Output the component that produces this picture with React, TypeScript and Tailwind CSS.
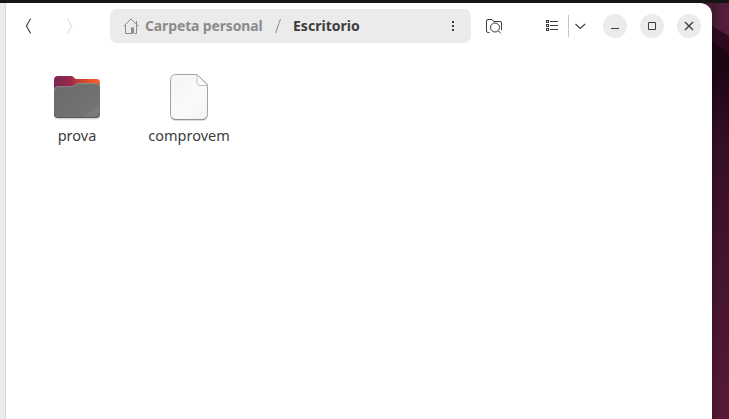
import React from "react";

function Wallpaper() {
  return (
    <svg className="absolute right-0 top-[3px] h-[416px] w-[31px]" viewBox="698 3 31 416" preserveAspectRatio="none" aria-hidden="true">
      <defs>
        <linearGradient id="base" x1="0" y1="0" x2="0" y2="1">
          <stop offset="0" stopColor="#1c0512" />
          <stop offset="0.16" stopColor="#1e0613" />
          <stop offset="0.33" stopColor="#350f24" />
          <stop offset="0.6" stopColor="#43142e" />
          <stop offset="1" stopColor="#561938" />
        </linearGradient>
        <linearGradient id="upper" x1="0" y1="0" x2="1" y2="0">
          <stop offset="0" stopColor="#421630" />
          <stop offset="1" stopColor="#56203f" />
        </linearGradient>
        <linearGradient id="edge" x1="0" y1="0" x2="1" y2="0">
          <stop offset="0" stopColor="#000" stopOpacity="0.15" />
          <stop offset="1" stopColor="#000" stopOpacity="0" />
        </linearGradient>
      </defs>
      <rect x="698" y="3" width="31" height="416" fill="url(#base)" />
      <path d="M698 3H729V54L712 41L698 32Z" fill="#2d0a1d" />
      <path d="M698 3H729V36L712 26L698 18Z" fill="url(#upper)" />
      <rect x="712" y="3" width="8" height="416" fill="url(#edge)" />
    </svg>
  );
}

function HomeIcon() {
  return (
    <svg className="h-4 w-4 shrink-0" viewBox="0 0 16 16" fill="none" stroke="#8b8b8b">
      <path d="M.6 8.3L8 .9l7.4 7.4M2.5 6.8v8.7h6V10M13.500 3v12.500h-2" />
      <path d="M8 9.500h3v6H8z" fill="#8b8b8b" stroke="none" />
    </svg>
  );
}

function SearchFolderIcon() {
  return (
    <svg className="h-4 w-[17px]" viewBox="0 0 17 16" fill="none" stroke="#3d3d3d">
      <path d="M3.500 14.500H2A1.500 1.500 0 0 1 .500 13V3A1.500 1.500 0 0 1 2 1.500h4l1.500 2H14A1.500 1.500 0 0 1 15.500 5V12" />
      <circle cx="9" cy="9.500" r="4.500" />
      <path d="M12.300 12.800L14.700 15.300" />
    </svg>
  );
}

function ListIcon() {
  return (
    <svg className="h-3 w-3" viewBox="0 0 12 12" fill="none" stroke="#3d3d3d">
      <path d="M.5.5h2v2h-2zM.5 4.5h2v2h-2zM.5 8.5h2v2h-2zM4 1.5h8M4 5.5h8M4 9.5h8" strokeWidth="1.15" />
    </svg>
  );
}

function WindowButton({ label, children }: { label: string; children: React.ReactNode }) {
  return (
    <button aria-label={label} className="h-6 w-6 rounded-full bg-[#ebebeb]">
      <svg className="h-6 w-6" viewBox="0 0 24 24" fill="none" stroke="#3d3d3d">
        {children}
      </svg>
    </button>
  );
}

function FolderIcon() {
  return (
    <svg className="h-12 w-12" viewBox="0 0 48 48">
      <defs>
        <linearGradient id="back" x1="0" y1="0" x2="1" y2="0">
          <stop offset="0" stopColor="#7c2853" />
          <stop offset="0.35" stopColor="#98294a" />
          <stop offset="0.55" stopColor="#c23e38" />
          <stop offset="0.85" stopColor="#ee5a24" />
          <stop offset="1" stopColor="#f0622b" />
        </linearGradient>
        <linearGradient id="front" x1="0" y1="0" x2="1" y2="1">
          <stop offset="0" stopColor="#6a6a6a" />
          <stop offset="0.8" stopColor="#737373" />
          <stop offset="0.81" stopColor="#7b7b7b" />
          <stop offset="1" stopColor="#777" />
        </linearGradient>
      </defs>
      <rect x="1" y="6" width="46" height="40.5" rx="4" fill="#000" opacity="0.12" />
      <path d="M1 7a4 4 0 0 1 4-4h13q1.500 0 2.500 1l1.500 1.400q.8.600 2 .600h19a4 4 0 0 1 4 4V35H1Z" fill="url(#back)" />
      <path d="M1 17.300a4 4 0 0 1 4-4h13.500q1.400 0 2.400-.9l2-1.600Q23.800 10.200 25.500 10.200h17.500a4 4 0 0 1 4 4V41a4 4 0 0 1-4 4H5a4 4 0 0 1-4-4Z" fill="url(#front)" />
      <path d="M1.500 17.300A3.500 3.500 0 0 1 5 13.700h13.500q1.500 0 2.600-1l2-1.500Q24 10.600 25.500 10.600h17.500a3.500 3.500 0 0 1 3.500 3.500" fill="none" stroke="#939393" strokeWidth="0.8" />
      <path d="M1.500 41A3.500 3.500 0 0 0 5 44.600h38a3.500 3.500 0 0 0 3.500-3.600" fill="none" stroke="#555" strokeWidth="0.9" />
    </svg>
  );
}

function FileIcon() {
  return (
    <svg className="h-12 w-12" viewBox="0 0 48 48">
      <defs>
        <linearGradient id="paper" x1="0" y1="0" x2="1" y2="1">
          <stop offset="0" stopColor="#f5f5f5" />
          <stop offset="0.6" stopColor="#fafafa" />
          <stop offset="1" stopColor="#f3f3f3" />
        </linearGradient>
      </defs>
      <rect x="5" y="4" width="38" height="44" rx="5.500" fill="#000" opacity="0.1" />
      <path d="M10.500 1.500H32L42.500 12V41.500a5 5 0 0 1-5 5H10.500a5 5 0 0 1-5-5V6.500a5 5 0 0 1 5-5Z" fill="url(#paper)" stroke="#a4a4a4" />
      <path d="M32 1.500V9.500a3 3 0 0 0 3 3h7.500" fill="#fff" stroke="#bcbcbc" />
      <path d="M32.500 1L43 11.500V0Z" fill="#fff" />
      <path d="M32 1.500L42.500 12" stroke="#a4a4a4" />
      <path d="M6.500 44.200Q8 46.600 10.500 46.600h27q2.500 0 4-2.400" fill="none" stroke="#929292" />
    </svg>
  );
}

export default function App() {
  return (
    <div className="relative flex h-[419px] w-[729px] flex-col overflow-hidden bg-[#161514] font-['Noto_Sans',sans-serif] text-[#3d3d3d]">
      <Wallpaper />
      <div className="h-[3px] shrink-0 bg-[#161514]" />
      <div className="relative flex w-[712px] flex-1 overflow-hidden rounded-tr-[12px] bg-white">
        <aside className="w-1.5 shrink-0 border-r border-[#d9d9d9] bg-[#ebebeb]" />
        <main className="flex-1">
          <header className="flex h-[46px] items-center">
            <button aria-label="Back" className="ml-[19px]">
              <svg className="h-4 w-[7px]" viewBox="0 0 7 16" fill="none" stroke="#3d3d3d" strokeWidth="1.1">
                <path d="M5.700 .500L1.400 8l4.300 7.500" />
              </svg>
            </button>
            <button aria-label="Forward" className="ml-[34px]">
              <svg className="h-4 w-[7px]" viewBox="0 0 7 16" fill="none" stroke="#dedede" strokeWidth="1.1">
                <path d="M1.300 .500L5.600 8l-4.300 7.500" />
              </svg>
            </button>
            <nav className="ml-[37px] flex h-[34px] w-[361px] items-center whitespace-nowrap rounded-[7px] bg-[#ebebeb] pl-[13px] text-[14px] font-bold">
              <HomeIcon />
              <span className="ml-1.5 w-[118px] pb-0.5 tracking-[-0.14px] text-[#8b8b8b]">Carpeta personal</span>
              <svg className="ml-3 h-4 w-[6px]" viewBox="0 0 6 16" stroke="#8b8b8b">
                <path d="M5.500 1L.500 15" />
              </svg>
              <span className="ml-3 w-[67px] pb-0.5 tracking-[0.02px]">Escritorio</span>
              <svg className="ml-[91px] h-3 w-[4px]" viewBox="0 0 4 12" fill="#3d3d3d">
                <path d="M1 1h2v2H1zM1 5h2v2H1zM1 9h2v2H1z" />
              </svg>
            </nav>
            <button aria-label="Search" className="ml-[15px]">
              <SearchFolderIcon />
            </button>
            <button aria-label="List view" className="ml-[43px]">
              <ListIcon />
            </button>
            <div className="ml-2.5 h-[22px] w-px bg-[#c6c6c6]" />
            <button aria-label="View options" className="ml-1.5">
              <svg className="h-3 w-[11px]" viewBox="0 0 11 12" fill="none" stroke="#3d3d3d" strokeWidth="1.1">
                <path d="M.500 4l4.800 4.500L10.100 4" />
              </svg>
            </button>
            <div className="ml-[17px] flex gap-[13px]">
              <WindowButton label="Minimize"><path d="M8 14.500h8" /></WindowButton>
              <WindowButton label="Maximize"><path d="M8.500 8.500h7v7h-7z" /></WindowButton>
              <WindowButton label="Close"><path d="M8 8l8 8M16 8l-8 8" strokeWidth="1.400" /></WindowButton>
            </div>
          </header>
          <section className="flex pl-[15px] pt-6 text-[14.500px]">
            <div className="flex w-[112px] flex-col items-center">
              <FolderIcon />
              <span className="mt-1 leading-5">prova</span>
            </div>
            <div className="flex w-[112px] flex-col items-center">
              <FileIcon />
              <span className="mt-1 leading-5">comprovem</span>
            </div>
          </section>
        </main>
      </div>
    </div>
  );
}
